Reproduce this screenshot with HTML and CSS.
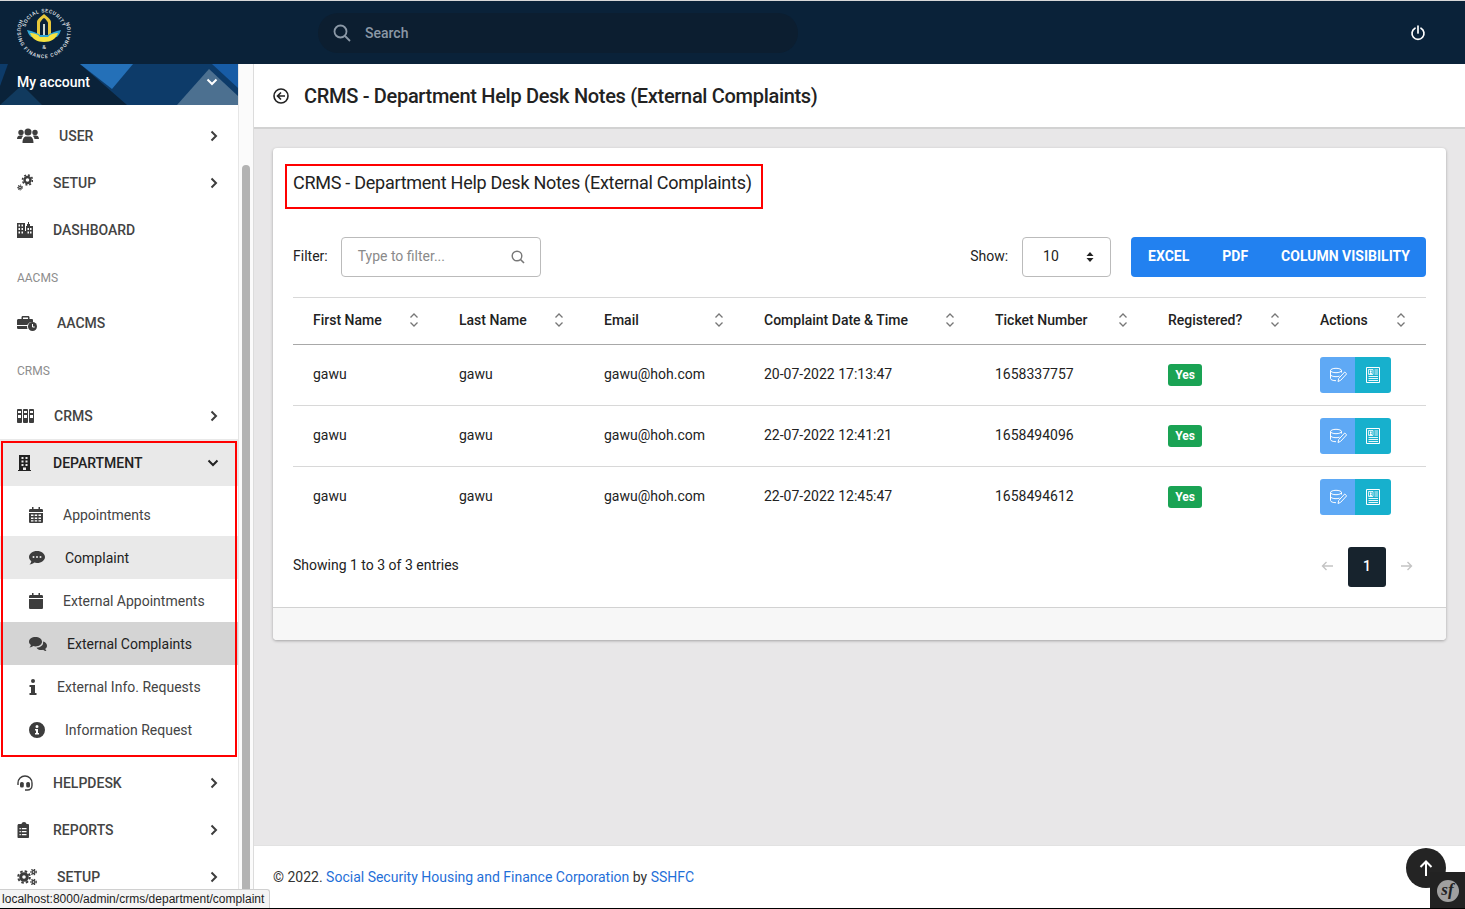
FILE: index.html
```html
<!DOCTYPE html>
<html lang="en">
<head>
    <meta charset="UTF-8">
    <meta name="viewport" content="width=device-width, initial-scale=1.0">
    <title>CRMS - Department Help Desk Notes</title>
    <link rel="stylesheet" href="styles.css">
</head>
<body>
    <svg class="icon-defs" width="0" height="0">
        <symbol id="chev-right" viewBox="0 0 10 12"><path d="M2.5 1.5 7 6l-4.500 4.500" fill="none" stroke="currentColor" stroke-width="2"/></symbol>
        <symbol id="chev-down" viewBox="0 0 12 10"><path d="M1.500 2.500 6 7l4.500-4.500" fill="none" stroke="currentColor" stroke-width="2"/></symbol>
        <symbol id="sort" viewBox="0 0 10 16"><path d="M1.500 5.500 5 2l3.500 3.500M1.500 10.500 5 14l3.500-3.500" fill="none" stroke="#777" stroke-width="1.300"/></symbol>
        <symbol id="db-edit" viewBox="0 0 18 16"><ellipse cx="7" cy="3.500" rx="5.500" ry="2.200" fill="none" stroke="#fff"/><path d="M1.500 3.500v8c0 1.300 2.500 2.200 5.500 2.200M1.500 7.500c0 1.300 2.500 2.200 5.500 2.200 1.500 0 2.500-.2 3.500-.6M12.500 3.500v2" fill="none" stroke="#fff"/><path d="M9 14.500l.7-3 6-6.500 2 1.800-6 6.500z" fill="none" stroke="#fff"/></symbol>
        <symbol id="profile" viewBox="0 0 14 16"><path d="M.5.500h13v15H.5z" fill="none" stroke="#fff"/><path d="M2.500 2.500h4.500v5H2.500z" fill="none" stroke="#fff" stroke-width=".8"/><path d="M3.500 7.500c0-1.500.5-2 1.250-2S6 6 6 7.500zM4.750 3.300a1 1 0 1 0 .01 0z" fill="#fff"/><path d="M8.500 3h3.500M8.500 5h3.500M8.500 7h3.500M2.500 9.500h9.500M2.500 11.500h9.500M2.500 13.500h9.500" stroke="#fff" stroke-width=".9"/></symbol>
    </svg>

    <header class="topbar">
        <svg class="logo" width="58" height="58" viewBox="0 0 58 58">
            <defs>
                <path id="logoRing" d="M5 15.500A26.800 26.800 0 1 0 53 15.500"/>
                <path id="logoInner" d="M10.300 24A19 19 0 0 1 47.700 24"/>
            </defs>
            <text class="logo-text"><textPath href="#logoRing" textLength="106">HOUSING FINANCE CORPORATION</textPath></text>
            <text class="logo-text"><textPath href="#logoInner" textLength="50" startOffset="1">SOCIAL SECURITY</textPath></text>
            <path d="M22 31V18c0-3 4-5 7-8 3 3 7 5 7 8v13z" fill="#e8c83a"/>
            <path d="M25 31V19c0-1 3-5 4-5s4 4 4 5v12z" fill="#0a2239"/>
            <path d="M28 31V20h2v11z" fill="#cfd8d0"/>
            <path d="M12 26c6 1 10 3 13 5h8c3-2 7-4 13-5-1 3-2 5-4 7H16c-2-2-3-4-4-7z" fill="#2fa7d6"/>
            <path d="M15 29c4 0 8 1 10 4h8c2-3 6-4 10-4-2 6-7 9-14 9s-12-3-14-9z" fill="#f5e33e"/>
            <text class="logo-amp" x="29" y="45">&amp;</text>
        </svg>
        <div class="search">
            <svg width="18" height="18" viewBox="0 0 18 18"><circle cx="7.500" cy="7.500" r="6" fill="none" stroke="#8b98a6" stroke-width="1.800"/><path d="M12 12l5 5" stroke="#8b98a6" stroke-width="1.800"/></svg>
            <span>Search</span>
        </div>
        <svg class="power" width="16" height="16" viewBox="0 0 16 16"><path d="M5 3.200a6 6 0 1 0 6 0M8 1v7" fill="none" stroke="#fff" stroke-width="1.700" stroke-linecap="round"/></svg>
    </header>

    <div class="app">
        <aside class="sidebar">
            <div class="account">
                <svg class="account-bg" width="238" height="41" viewBox="0 0 238 41">
                    <path d="M0 0h238v41H0z" fill="#0d3b69"/>
                    <path d="M0 22 8 0h72l47 41H0z" fill="#0a2239"/>
                    <path d="M0 41 22 21l20 20z" fill="#113a5e"/>
                    <path d="M80 0h53l-21 25z" fill="#2470b8"/>
                    <path d="M177 41l32-36 29 27v9z" fill="#4c7090"/>
                    <path d="M212 0h26v24z" fill="#175ca6"/>
                </svg>
                <span>My account</span>
                <svg class="chev-s" width="12" height="10"><use href="#chev-down"/></svg>
            </div>

            <nav class="menu">
                <a class="item"><svg width="22" height="16" viewBox="0 0 22 16"><circle cx="4" cy="4.500" r="2.700"/><circle cx="18" cy="4.500" r="2.700"/><circle cx="11" cy="4" r="3.500"/><path d="M0 11c0-2.500 1.500-3.500 3-3.500h2c1 0 1 .5 1 .5-1 1-1.500 2-1.500 3zM22 11c0-2.500-1.500-3.500-3-3.500h-2c-1 0-1 .5-1 .5 1 1 1.500 2 1.500 3zM5.500 15c0-4 1.500-6.500 3.500-6.500h4c2 0 3.500 2.500 3.500 6.500z"/></svg>USER<svg class="arrow" width="10" height="12"><use href="#chev-right"/></svg></a>
                <a class="item"><svg width="16" height="17" viewBox="0 0 16 17"><circle cx="10.500" cy="6" r="3" fill="none" stroke="currentColor" stroke-width="2.400"/><circle cx="10.500" cy="6" r="5" fill="none" stroke="currentColor" stroke-width="1.600" stroke-dasharray="2 1.900"/><circle cx="3" cy="13.500" r="1.300" fill="none" stroke="currentColor" stroke-width="1.300"/><circle cx="3" cy="13.500" r="2.500" fill="none" stroke="currentColor" stroke-width="1" stroke-dasharray="1.200 1.100"/></svg>SETUP<svg class="arrow" width="10" height="12"><use href="#chev-right"/></svg></a>
                <a class="item"><svg width="16" height="16" viewBox="0 0 16 16"><path fill-rule="evenodd" d="M0 1h8v15H0zM9 4h1V2h1V0h1v2h1v2h3v12H9zM1.500 2.500v2h1.500v-2zM4.500 2.500v2H6v-2zM1.500 6v2h1.500V6zM4.500 6v2H6V6zM1.500 9.500v2h1.500v-2zM4.500 9.500v2H6v-2zM10.500 6v2H12V6zM13 6v2h1.500V6zM10.500 9.500v2H12v-2zM13 9.500v2h1.500v-2z"/><path d="M8 9h1v7H8z"/></svg>DASHBOARD</a>

                <div class="label">AACMS</div>
                <a class="item"><svg width="20" height="16" viewBox="0 0 20 16"><path d="M6 1h5c1 0 1.500.5 1.500 1.500V4h2.500c1 0 1 1 1 1v2a5.500 5.500 0 0 0-5.700 3H0V5.500C0 4.500.7 4 1.500 4h3V2.500C4.500 1.500 5 1 6 1zm0 1.500V4h5V2.500zM0 11h10.100c-.1 1 0 2 .4 3H1.500C.7 14 0 13.500 0 12.500z"/><circle cx="15.500" cy="11.500" r="4.500"/><path d="M15.500 9v3h2.200" fill="none" stroke="#fff"/></svg>AACMS</a>

                <div class="label">CRMS</div>
                <a class="item"><svg width="17" height="14" viewBox="0 0 17 14"><path fill-rule="evenodd" d="M0 1c0-.5.500-1 1-1h3c.5 0 1 .5 1 1v12c0 .5-.5 1-1 1H1c-.5 0-1-.5-1-1zm1 1v2h3V2zm0 4v3h3V6zM6 1c0-.5.500-1 1-1h3c.5 0 1 .5 1 1v12c0 .5-.5 1-1 1H7c-.5 0-1-.5-1-1zm1 1v2h3V2zm0 4v3h3V6zM12 1c0-.5.500-1 1-1h3c.5 0 1 .5 1 1v12c0 .5-.5 1-1 1h-3c-.5 0-1-.5-1-1zm1 1v2h3V2zm0 4v3h3V6z"/></svg>CRMS<svg class="arrow" width="10" height="12"><use href="#chev-right"/></svg></a>

                <div class="dept-group">
                    <a class="item item-dept"><svg width="16" height="16" viewBox="0 0 16 16"><path fill-rule="evenodd" d="M2 0h11v15h1v1H1v-1h1zM4.500 2v2h2V2zm4 0v2h2V2zM4.500 5.500v2h2v-2zm4 0v2h2v-2zM4.500 9v2h2V9zm4 0v2h2V9zM6 12.500V15h3v-2.500z"/></svg>DEPARTMENT<svg class="arrow" width="12" height="10"><use href="#chev-down"/></svg></a>
                    <div class="sub">
                        <a class="sub-item"><svg width="14" height="16" viewBox="0 0 14 16"><path fill-rule="evenodd" d="M3 0h1.500v2h5V0H11v2h1.500c1 0 1.500.5 1.500 1.500V5H0V3.500C0 2.500.5 2 1.500 2H3zM0 6h14v8.500c0 1-.5 1.500-1.500 1.500h-11C.5 16 0 15.500 0 14.500zm2 1.500V9h2.500V7.500zm3.700 0V9h2.500V7.500zm3.800 0V9H12V7.500zM2 10.500V12h2.500v-1.500zm3.700 0V12h2.500v-1.500zm3.800 0V12H12v-1.500zM2 13.200v1.300h2.500v-1.300zm3.700 0v1.300h2.500v-1.300zm3.800 0v1.300H12v-1.300z"/></svg>Appointments</a>
                        <a class="sub-item sub-hover"><svg width="16" height="14" viewBox="0 0 16 14"><path fill-rule="evenodd" d="M8 0c4.400 0 8 2.700 8 6s-3.600 6-8 6c-1 0-2-.1-2.800-.4C4.200 12.500 2.500 13.500.5 13.500c1-1 1.700-2.200 1.800-3.300C.9 9.100 0 7.600 0 6c0-3.300 3.600-6 8-6zM4.500 5a1 1 0 1 0 0 2 1 1 0 0 0 0-2zM8 5a1 1 0 1 0 0 2 1 1 0 0 0 0-2zm3.500 0a1 1 0 1 0 0 2 1 1 0 0 0 0-2z"/></svg>Complaint</a>
                        <a class="sub-item"><svg width="14" height="16" viewBox="0 0 14 16"><path d="M3 0h1.500v2h5V0H11v2h1.500c1 0 1.500.5 1.500 1.500V5H0V3.500C0 2.500.5 2 1.500 2H3zM0 6h14v8.500c0 1-.5 1.500-1.500 1.500h-11C.5 16 0 15.500 0 14.500z"/></svg>External Appointments</a>
                        <a class="sub-item sub-active"><svg width="18" height="14" viewBox="0 0 18 14"><path d="M6.500 0C10 0 13 2 13 4.700s-3 4.700-6.500 4.700c-.8 0-1.500-.1-2.200-.3C3.300 9.800 2 10.500.5 10.500c.8-.7 1.300-1.600 1.400-2.500C.7 7.100 0 6 0 4.700 0 2 2.900 0 6.500 0z"/><path d="M14 4.500c2.300.5 4 2.200 4 4.200 0 1.200-.6 2.300-1.700 3 .1.800.5 1.600 1.200 2.300-1.300 0-2.500-.6-3.400-1.300-.6.200-1.300.3-2 .3-2 0-3.700-.9-4.600-2.300 4.300-.1 7.300-2.700 6.500-6.200z"/></svg>External Complaints</a>
                        <a class="sub-item"><svg width="8" height="16" viewBox="0 0 8 16"><circle cx="4" cy="2" r="2"/><path d="M.5 6H6v8h1.500v2h-7v-2H2V8H.5z"/></svg>External Info. Requests</a>
                        <a class="sub-item"><svg width="16" height="16" viewBox="0 0 16 16"><path fill-rule="evenodd" d="M8 0a8 8 0 1 1 0 16A8 8 0 0 1 8 0zm0 3a1.500 1.500 0 1 0 0 3 1.500 1.500 0 0 0 0-3zM6 7v1.500h1V11H6v1.500h4V11H9V7z"/></svg>Information Request</a>
                    </div>
                </div>

                <a class="item"><svg width="16" height="16" viewBox="0 0 16 16"><path d="M1 10V8a7 7 0 0 1 14 0v2.500c0 2.500-2 4.500-4.500 4.500H8" fill="none" stroke="currentColor" stroke-width="1.400"/><rect x="3" y="7" width="3.800" height="5.500" rx="1.600"/><rect x="9.200" y="7" width="3.800" height="5.500" rx="1.600"/></svg>HELPDESK<svg class="arrow" width="10" height="12"><use href="#chev-right"/></svg></a>
                <a class="item"><svg width="16" height="16" viewBox="0 0 16 16"><path fill-rule="evenodd" d="M4 2h1.500C5.700.9 6.700 0 8 0s2.300.9 2.500 2H12c.8 0 1 .6 1 1.500V15c0 .6-.4 1-1 1H2.500c-.6 0-1-.4-1-1V3.500C1.500 2.600 2 2 3 2zM3.500 6v1.300h1.300V6zm2.300 0v1.300h4.700V6zm-2.300 3v1.300h1.300V9zm2.300 0v1.300h4.700V9zm-2.300 3v1.300h1.300V12zm2.300 0v1.300h4.700V12z" transform="translate(-1 0)"/></svg>REPORTS<svg class="arrow" width="10" height="12"><use href="#chev-right"/></svg></a>
                <a class="item"><svg width="20" height="16" viewBox="0 0 20 16"><circle cx="7" cy="8" r="3.300" fill="none" stroke="currentColor" stroke-width="3"/><circle cx="7" cy="8" r="5.800" fill="none" stroke="currentColor" stroke-width="2" stroke-dasharray="2.500 2.050"/><circle cx="16.500" cy="3" r="1.500" fill="none" stroke="currentColor" stroke-width="1.400"/><circle cx="16.500" cy="3" r="2.800" fill="none" stroke="currentColor" stroke-width="1.100" stroke-dasharray="1.400 1.240"/><circle cx="16.500" cy="13" r="1.500" fill="none" stroke="currentColor" stroke-width="1.400"/><circle cx="16.500" cy="13" r="2.800" fill="none" stroke="currentColor" stroke-width="1.100" stroke-dasharray="1.400 1.240"/></svg>SETUP<svg class="arrow" width="10" height="12"><use href="#chev-right"/></svg></a>
            </nav>
        </aside>
        <div class="side-scroll"><div class="side-thumb"></div></div>

        <main class="main">
            <div class="page-head">
                <svg width="16" height="16" viewBox="0 0 16 16"><circle cx="8" cy="8" r="7" fill="none" stroke="#222" stroke-width="1.600"/><path d="M8 4.500 4.500 8 8 11.500M4.500 8H12" fill="none" stroke="#222" stroke-width="1.600"/></svg>
                <h1>CRMS - Department Help Desk Notes (External Complaints)</h1>
            </div>

            <div class="content">
                <section class="card">
                    <div class="card-body">
                        <h2 class="card-title">CRMS - Department Help Desk Notes (External Complaints)</h2>

                        <div class="tools">
                            <label class="tool-label">Filter:</label>
                            <div class="filter">
                                <span>Type to filter...</span>
                                <svg width="14" height="14" viewBox="0 0 14 14"><circle cx="6" cy="6" r="4.800" fill="none" stroke="#777" stroke-width="1.400"/><path d="M9.500 9.500 13 13" stroke="#777" stroke-width="1.600"/></svg>
                            </div>
                            <label class="tool-label show-label">Show:</label>
                            <div class="show">
                                <span>10</span>
                                <svg width="8" height="10" viewBox="0 0 8 10"><path d="M4 0l3.500 4H.5zM4 10 .5 6h7z" fill="#222"/></svg>
                            </div>
                            <div class="btn-group">
                                <button class="btn-wide">EXCEL</button>
                                <button class="btn-wide">PDF</button>
                                <button>COLUMN VISIBILITY</button>
                            </div>
                        </div>

                        <table class="grid">
                            <colgroup>
                                <col class="c1"><col class="c2"><col class="c3"><col class="c4"><col class="c5"><col class="c6"><col class="c7">
                            </colgroup>
                            <thead>
                                <tr>
                                    <th><div class="th-in">First Name<svg width="10" height="16"><use href="#sort"/></svg></div></th>
                                    <th><div class="th-in">Last Name<svg width="10" height="16"><use href="#sort"/></svg></div></th>
                                    <th><div class="th-in">Email<svg width="10" height="16"><use href="#sort"/></svg></div></th>
                                    <th><div class="th-in">Complaint Date &amp; Time<svg width="10" height="16"><use href="#sort"/></svg></div></th>
                                    <th><div class="th-in">Ticket Number<svg width="10" height="16"><use href="#sort"/></svg></div></th>
                                    <th><div class="th-in">Registered?<svg width="10" height="16"><use href="#sort"/></svg></div></th>
                                    <th><div class="th-in">Actions<svg width="10" height="16"><use href="#sort"/></svg></div></th>
                                </tr>
                            </thead>
                            <tbody>
                                <tr>
                                    <td>gawu</td><td>gawu</td><td>gawu@hoh.com</td><td>20-07-2022 17:13:47</td><td>1658337757</td>
                                    <td class="td-ctl"><span class="badge">Yes</span></td>
                                    <td class="td-ctl"><div class="actions"><a class="act act-edit"><svg width="18" height="16"><use href="#db-edit"/></svg></a><a class="act act-view"><svg width="14" height="16"><use href="#profile"/></svg></a></div></td>
                                </tr>
                                <tr>
                                    <td>gawu</td><td>gawu</td><td>gawu@hoh.com</td><td>22-07-2022 12:41:21</td><td>1658494096</td>
                                    <td class="td-ctl"><span class="badge">Yes</span></td>
                                    <td class="td-ctl"><div class="actions"><a class="act act-edit"><svg width="18" height="16"><use href="#db-edit"/></svg></a><a class="act act-view"><svg width="14" height="16"><use href="#profile"/></svg></a></div></td>
                                </tr>
                                <tr>
                                    <td>gawu</td><td>gawu</td><td>gawu@hoh.com</td><td>22-07-2022 12:45:47</td><td>1658494612</td>
                                    <td class="td-ctl"><span class="badge">Yes</span></td>
                                    <td class="td-ctl"><div class="actions"><a class="act act-edit"><svg width="18" height="16"><use href="#db-edit"/></svg></a><a class="act act-view"><svg width="14" height="16"><use href="#profile"/></svg></a></div></td>
                                </tr>
                            </tbody>
                        </table>

                        <div class="table-foot">
                            <span class="entries">Showing 1 to 3 of 3 entries</span>
                            <div class="pager">
                                <svg width="12" height="10" viewBox="0 0 12 10"><path d="M5.500 1 1.500 5l4 4M1.500 5H12" fill="none" stroke="#c4c4c4" stroke-width="1.400"/></svg>
                                <a class="page-no">1</a>
                                <svg width="12" height="10" viewBox="0 0 12 10"><path d="M6.500 1l4 4-4 4M10.500 5H0" fill="none" stroke="#c4c4c4" stroke-width="1.400"/></svg>
                            </div>
                        </div>
                    </div>
                    <div class="card-foot"></div>
                </section>
            </div>

            <footer class="footer">
                <span>© 2022. <a>Social Security Housing and Finance Corporation</a> by <a>SSHFC</a></span>
            </footer>
        </main>
    </div>

    <a class="to-top"><svg width="14" height="16" viewBox="0 0 14 16"><path d="M1.500 7 7 1.500 12.500 7M7 2v14" fill="none" stroke="#fff" stroke-width="2"/></svg></a>
    <div class="sf-bar"><span class="sf-logo">sf</span></div>
    <div class="status-tip">localhost:8000/admin/crms/department/complaint</div>
</body>
</html>
```

FILE: styles.css
```css
* {
    box-sizing: border-box;
}

html, body {
    height: 100%;
}

body {
    margin: 0;
    height: 909px;
    overflow: hidden;
    position: relative;
    font-family: Roboto, Arial, sans-serif;
    font-size: 14px;
    color: #222;
    background-color: #e8e7e8;
    border-top: 1px solid #d8d8d8;
    border-bottom: 1px solid #000;
}

.icon-defs {
    position: absolute;
}

/* top bar */
.topbar {
    height: 63px;
    background-color: #0a2239;
    display: flex;
    align-items: center;
    padding-left: 15px;
}

.logo {
    flex-shrink: 0;
}

.logo-text {
    font-family: Roboto, Arial, sans-serif;
    font-size: 5px;
    font-weight: 500;
    fill: #e6eaee;
}

.logo-amp {
    font-family: Roboto, Arial, sans-serif;
    font-size: 6px;
    fill: #fff;
    text-anchor: middle;
}

.search {
    width: 480px;
    height: 40px;
    margin-left: 245px;
    border-radius: 20px;
    background-color: #0c1e30;
    display: flex;
    align-items: center;
    gap: 14px;
    padding-left: 15px;
    color: #8b98a6;
    font-weight: 500;
}

.power {
    margin-left: auto;
    margin-right: 39px;
}

/* layout */
.app {
    display: flex;
    height: 844px;
}

.sidebar {
    width: 238px;
    flex-shrink: 0;
    background-color: #fff;
    overflow: hidden;
}

.side-scroll {
    width: 16px;
    flex-shrink: 0;
    background-color: #fbfbfb;
    border-left: 1px solid #e6e6e6;
    border-right: 1px solid #dcdcdc;
    padding: 101px 3px 0 3px;
}

.side-thumb {
    height: 100%;
    background-color: #b3b3b3;
    border-radius: 4px 4px 0 0;
}

.account {
    height: 41px;
    position: relative;
    display: flex;
    align-items: center;
    justify-content: space-between;
    padding: 0 20px 5px 17px;
    color: #fff;
    font-weight: 500;
}

.account-bg {
    position: absolute;
    left: 0;
    top: 0;
}

.account span, .chev-s {
    position: relative;
}

.menu {
    padding-top: 7px;
}

.item {
    height: 47px;
    display: flex;
    align-items: center;
    gap: 20px;
    padding: 0 19px 0 17px;
    color: #444;
    font-weight: 500;
}

.item svg, .sub-item svg {
    fill: #3d3d3d;
    color: #3d3d3d;
    flex-shrink: 0;
}

.item .arrow {
    margin-left: auto;
}

.label {
    height: 46px;
    padding-top: 2px;
    line-height: 46px;
    padding-left: 17px;
    font-size: 12px;
    color: #8d8d8d;
}

.dept-group {
    position: relative;
}

/* red frame from the annotated screenshot */
.dept-group::after {
    content: "";
    position: absolute;
    left: 1px;
    right: 1px;
    top: 2px;
    bottom: 2px;
    border: 2px solid #f00;
    pointer-events: none;
}

.item-dept {
    background-color: #e9e9e9;
    color: #222;
}

.item-dept svg {
    fill: #222;
    color: #222;
}

.sub {
    padding: 7px 0 8px 0;
}

.sub-item {
    height: 43px;
    display: flex;
    align-items: center;
    gap: 20px;
    padding-left: 29px;
    color: #444;
}

.sub-hover {
    background-color: #e9e9e9;
    color: #222;
}

.sub-active {
    background-color: #d4d4d4;
    color: #222;
}

/* main column */
.main {
    flex: 1;
    min-width: 0;
    display: flex;
    flex-direction: column;
}

.page-head {
    height: 65px;
    flex-shrink: 0;
    background-color: #fff;
    border-bottom: 2px solid #d2d2d2;
    display: flex;
    align-items: center;
    gap: 15px;
    padding-left: 19px;
}

.page-head h1 {
    margin: 0;
    font-size: 20px;
    font-weight: 500;
    letter-spacing: -0.31px;
    color: #222;
}

.content {
    flex: 1;
    padding: 19px 19px 0 19px;
}

.card {
    background-color: #fff;
    border-radius: 4px;
    box-shadow: 0 1px 3px rgba(0, 0, 0, 0.3);
}

.card-body {
    padding: 16px 20px 20px 20px;
}

.card-title {
    display: inline-block;
    height: 45px;
    margin: 0 0 0 -8px;
    padding: 0 9px 6px 6px;
    line-height: 33px;
    border: 2px solid #f00;
    font-size: 18px;
    font-weight: 400;
    letter-spacing: -0.27px;
    color: #222;
}

.tools {
    display: flex;
    align-items: center;
    margin-top: 28px;
    height: 40px;
}

.tool-label {
    margin-right: 13px;
    padding-bottom: 2px;
}

.filter {
    width: 200px;
    height: 40px;
    border: 1px solid #bbb;
    border-radius: 4px;
    display: flex;
    align-items: center;
    justify-content: space-between;
    padding: 0 15px 0 16px;
    color: #8a8a8a;
}

.filter span, .show span {
    padding-bottom: 2px;
}

.show-label {
    margin-left: auto;
    margin-right: 14px;
}

.show {
    width: 89px;
    height: 40px;
    border: 1px solid #bbb;
    border-radius: 4px;
    display: flex;
    align-items: center;
    justify-content: space-between;
    padding: 0 16px 0 20px;
    margin-right: 20px;
}

.btn-group {
    height: 40px;
    display: flex;
    background-color: #2281f0;
    border-radius: 4px;
    padding-left: 1px;
}

.btn-group button {
    border: none;
    background: none;
    padding: 0 16px 2px 16px;
    color: #fff;
    font-family: Roboto, Arial, sans-serif;
    font-size: 14px;
    font-weight: 700;
}

.btn-group .btn-wide {
    padding-right: 17px;
}

.grid {
    width: 100%;
    margin-top: 20px;
    border-collapse: collapse;
    table-layout: fixed;
    border-top: 1px solid #d8d8d8;
}

.c1 { width: 146px; }
.c2 { width: 145px; }
.c3 { width: 160px; }
.c4 { width: 231px; }
.c5 { width: 173px; }
.c6 { width: 152px; }

.grid th {
    height: 47px;
    padding: 0 20px 2px 20px;
    text-align: left;
    font-weight: 500;
    color: #222;
    border-bottom: 1px solid #a8a8a8;
}

.th-in {
    display: flex;
    align-items: center;
    justify-content: space-between;
}

.grid td {
    height: 61px;
    padding: 0 20px 2px 20px;
    color: #222;
    border-bottom: 1px solid #d8d8d8;
}

.grid .td-ctl {
    padding-bottom: 0;
}

.grid tbody tr:last-child td {
    height: 60px;
    border-bottom: none;
}

.badge {
    display: inline-block;
    width: 34px;
    height: 22px;
    line-height: 22px;
    text-align: center;
    background-color: #1aa354;
    border-radius: 3px;
    color: #fff;
    font-size: 12px;
    font-weight: 700;
}

.actions {
    display: flex;
    width: 71px;
    height: 36px;
}

.act {
    width: 35px;
    display: flex;
    align-items: center;
    justify-content: center;
}

.act-edit {
    background-color: #5fa9f5;
    border-radius: 3px 0 0 3px;
}

.act-view {
    width: 36px;
    background-color: #17b0cd;
    border-radius: 0 3px 3px 0;
}

.table-foot {
    display: flex;
    align-items: center;
    justify-content: space-between;
    margin-top: 20px;
    height: 40px;
}

.entries {
    padding-bottom: 4px;
}

.pager {
    display: flex;
    align-items: center;
    gap: 15px;
    padding-right: 13px;
}

.pager svg {
    margin-top: -1px;
}

.page-no {
    width: 38px;
    height: 40px;
    line-height: 38px;
    text-align: center;
    background-color: #17232d;
    border-radius: 3px;
    color: #fff;
    font-weight: 500;
}

.card-foot {
    height: 33px;
    background-color: #f7f7f7;
    border-top: 1px solid #d2d2d2;
    border-radius: 0 0 4px 4px;
}

.footer {
    height: 63px;
    flex-shrink: 0;
    background-color: #fff;
    border-top: 1px solid #e2e2e2;
    display: flex;
    align-items: center;
    padding-left: 19px;
    color: #333;
}

.footer a {
    color: #1f6fd8;
}

/* floating bits */
.to-top {
    position: absolute;
    left: 1406px;
    top: 847px;
    width: 40px;
    height: 40px;
    border-radius: 50%;
    background-color: #242424;
    display: flex;
    align-items: center;
    justify-content: center;
}

.sf-bar {
    position: absolute;
    left: 1430px;
    top: 871px;
    width: 35px;
    height: 37px;
    background-color: #222;
    display: flex;
    align-items: center;
    justify-content: center;
}

.sf-logo {
    width: 22px;
    height: 22px;
    border-radius: 50%;
    background-color: #a0a0a0;
    color: #222;
    font-family: "Liberation Serif", serif;
    font-style: italic;
    font-weight: 700;
    font-size: 17px;
    line-height: 20px;
    text-align: center;
}

.status-tip {
    position: absolute;
    left: 0;
    bottom: 0;
    height: 19px;
    padding: 0 5px 0 2px;
    line-height: 18px;
    background-color: #f4f4f4;
    border-top: 1px solid #d0d0d0;
    border-right: 1px solid #d0d0d0;
    border-radius: 0 3px 0 0;
    font-family: "Liberation Sans", Arial, sans-serif;
    font-size: 12px;
    letter-spacing: 0.02px;
    color: #222;
}
```
